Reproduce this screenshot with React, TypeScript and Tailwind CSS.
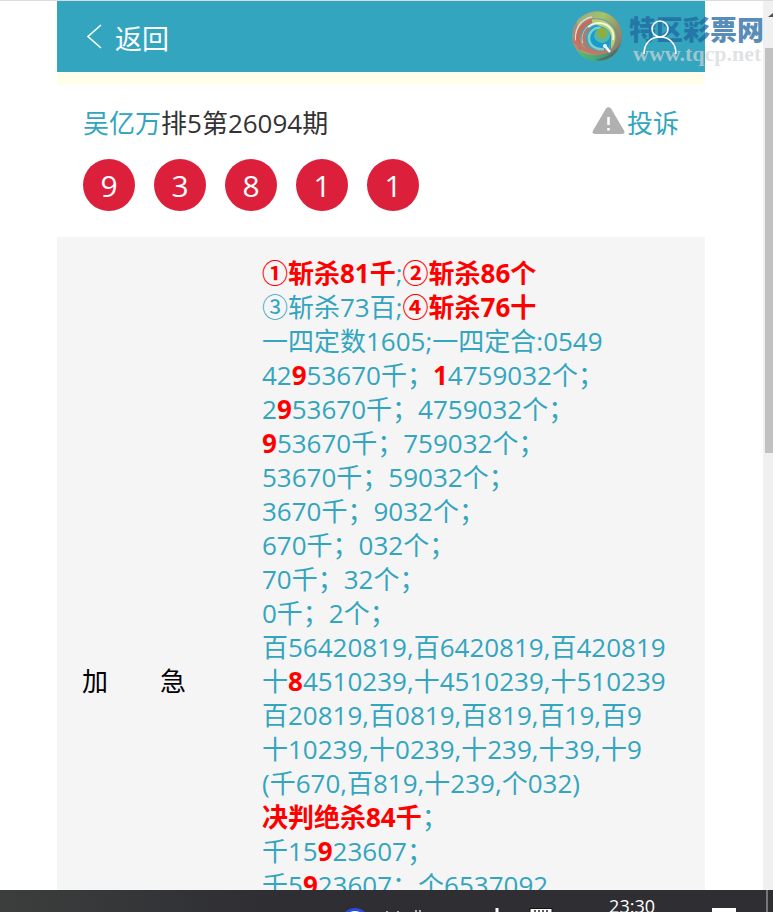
import React from 'react';

interface Segment {
  text: string;
  hot?: boolean;
}

// *...* marks a highlighted part of a line
const PLAN_LINES = [
  '*①斩杀81千*;*②斩杀86个*',
  '③斩杀73百;*④斩杀76十*',
  '一四定数1605;一四定合:0549',
  '42*9*53670千；*1*4759032个；',
  '2*9*53670千；4759032个；',
  '*9*53670千；759032个；',
  '53670千；59032个；',
  '3670千；9032个；',
  '670千；032个；',
  '70千；32个；',
  '0千；2个；',
  '百56420819,百6420819,百420819',
  '十*8*4510239,十4510239,十510239',
  '百20819,百0819,百819,百19,百9',
  '十10239,十0239,十239,十39,十9',
  '(千670,百819,十239,个032)',
  '*决判绝杀84千*；',
  '千15*9*23607；',
  '千5*9*23607；个6537092',
];

const DRAW_NUMBERS = [9, 3, 8, 1, 1];

function parseLine(line: string): Segment[] {
  return line
    .split('*')
    .map((text, i) => ({ text, hot: i % 2 === 1 }))
    .filter((segment) => segment.text !== '');
}

function UserIcon() {
  return (
    <svg width="34" height="38" viewBox="0 0 34 38" fill="none" stroke="#fff" strokeWidth="1.6">
      <circle cx="17" cy="11" r="8" />
      <path d="M1 36c0-10 6-17 16-17s16 7 16 17" />
    </svg>
  );
}

function SwirlLogo() {
  return (
    <svg width="52" height="52" viewBox="0 0 52 52" fill="none">
      <defs>
        <linearGradient id="swirl-base" x1="0" y1="0.3" x2="1" y2="0.7">
          <stop offset="0" stopColor="#b0857a" />
          <stop offset="0.5" stopColor="#9aa383" />
          <stop offset="1" stopColor="#8a7a6c" />
        </linearGradient>
        <linearGradient id="swirl-top" x1="0" y1="0" x2="1" y2="0.6">
          <stop offset="0" stopColor="#8fa890" />
          <stop offset="0.5" stopColor="#a3c468" />
          <stop offset="1" stopColor="#8f8f6c" />
        </linearGradient>
        <linearGradient id="swirl-bottom" x1="0" y1="0" x2="1" y2="0">
          <stop offset="0" stopColor="#58bd6c" />
          <stop offset="0.6" stopColor="#3f9f7c" />
          <stop offset="1" stopColor="#6d6f68" />
        </linearGradient>
      </defs>
      <circle cx="26" cy="26" r="25" fill="url(#swirl-base)" />
      <path d="M6 11C16-1 36-2 46 12c3 5 5 10 4 16C45 13 32 6 19 8 13 9 9 12 6 17z" fill="url(#swirl-top)" />
      <path d="M6 40c10 6 24 8 38-1 3-2 5-5 6-8-2 14-13 21-25 20-8 0-15-4-19-11z" fill="url(#swirl-bottom)" />
      <path d="M24 50c8-2 17-5 23-12-3 8-12 14-23 12z" fill="#555d63" opacity="0.7" />
      <circle cx="27" cy="26" r="17" fill="#35a6c2" />
      <path d="M13 13c10-7 23-4 29 5 4 7 3 15-2 21 1-10-2-19-11-23-6-3-12-3-16-3z" fill="#b9cf70" />
      <path d="M20 18c8-4 18-1 20 8 1 6-2 12-8 14-8 1-13-4-14-10-1-5 0-9 2-12z" fill="#169bd2" />
      <path d="M5 31c-2-12 5-22 16-24" stroke="#dfd9c9" strokeWidth="1.5" />
      <path d="M10 39c-7-12-1-25 11-28" stroke="#c56d5b" strokeWidth="4" />
      <path d="M12 33c-2-12 6-20 17-20 9 1 15 8 13 17" stroke="#eef7ea" strokeWidth="1.8" />
      <path d="M30 42c-10 1-17-5-17-14 0-4 2-7 5-10" stroke="#b5796c" strokeWidth="3.5" />
      <path d="M33 39c-9 1-15-4-15-11 0-6 5-11 12-10" stroke="#7fd0c5" strokeWidth="2.5" />
      <path d="M2 31c4 1 6 6 12 9 8 4 17 4 24 0" stroke="#c77562" strokeWidth="3" />
      <path d="M23 27c0-7 6-11 12-8 4 2 5 7 3 10-3 5-11 6-15-2z" fill="#55b7a1" />
      <circle cx="31" cy="23" r="5" fill="#8fae3c" />
      <path d="M33 35l6 7" stroke="#fff" strokeWidth="2.5" />
      <circle cx="34" cy="36" r="2" fill="#e8f5fa" />
    </svg>
  );
}

function Watermark() {
  return (
    <div className="pointer-events-none flex gap-1.5">
      <SwirlLogo />
      <div className="flex flex-col whitespace-nowrap pt-1">
        <span className="text-[27px] leading-8 font-black text-[#1f679f]/75">特区彩票网</span>
        <span className="pl-1 font-['Liberation_Serif',serif] text-[22px] leading-4 font-bold text-[#d2d5d8]/70">
          www.tqcp.net
        </span>
      </div>
    </div>
  );
}

function Header() {
  return (
    <header className="flex h-[71px] items-center justify-between bg-[#33a5be] px-7 text-white">
      <button type="button" className="flex items-center gap-3 text-[27px] leading-9">
        <svg width="18" height="26" viewBox="0 0 18 26" fill="none" stroke="#fff" strokeWidth="1.6">
          <path d="M16 1L3 12.500 16 24" />
        </svg>
        <span className="pt-1">返回</span>
      </button>
      <button type="button" aria-label="个人中心" className="relative z-10">
        <UserIcon />
      </button>
    </header>
  );
}

function IssueSummary() {
  return (
    <section className="px-[26px] pt-5 pb-[26px]">
      <div className="flex items-center justify-between leading-9">
        <h1 className="text-[#333]">
          <a href="#author" className="text-[#33a5be]">
            吴亿万
          </a>
          排5第26094期
        </h1>
        <a href="#complain" className="flex items-center gap-0.5 text-[#33a5be]">
          <svg width="33" height="28" viewBox="0 0 33 28" className="mb-1">
            <path
              d="M14 1.500Q16.500-1 19 1.500L32 23.500Q33.500 27 30 27H3Q-.5 27 1 23.500z"
              fill="#b0b0b0"
            />
            <path d="M16.500 10v8M16.500 21v2.500" stroke="#fff" strokeWidth="2.5" />
          </svg>
          投诉
        </a>
      </div>
      <ul className="mt-[18px] flex gap-[19px]">
        {DRAW_NUMBERS.map((n, i) => (
          <li
            key={i}
            className="flex size-[52px] items-center justify-center rounded-full bg-[#dc203c] text-[30px] text-white"
          >
            {n}
          </li>
        ))}
      </ul>
    </section>
  );
}

function PlanPanel() {
  return (
    <section className="flex items-center bg-[#f5f5f5] py-[19px] pl-[25px]">
      <h2 className="w-[180px] shrink-0 text-black">加　　急</h2>
      <div className="pb-[204px] leading-[34px] whitespace-nowrap text-[#33a5be]">
        {PLAN_LINES.map((line) => (
          <p key={line}>
            {parseLine(line).map((segment, i) =>
              segment.hot ? (
                <strong key={i} className="font-bold text-[#ff0000]">
                  {segment.text}
                </strong>
              ) : (
                <span key={i}>{segment.text}</span>
              )
            )}
          </p>
        ))}
      </div>
    </section>
  );
}

function ScrollTrack() {
  return (
    <div className="flex w-2.5 shrink-0 flex-col bg-[#f0f0f0] pl-0.5">
      <div className="flex h-[47px] shrink-0 items-start overflow-hidden pt-3">
        <svg width="8" height="5" viewBox="0 0 8 5">
          <path d="M3 4L8 0v4z" fill="#505050" />
        </svg>
      </div>
      <div className="h-[405px] bg-[#c1c1c1]" />
    </div>
  );
}

function Taskbar() {
  return (
    <footer className="flex h-[22px] shrink-0 items-start overflow-hidden bg-linear-to-r from-[#3c3e3d] via-[#2e2e33] via-35% to-[#2e2e33] text-white">
      <div className="flex flex-1 justify-end pr-[56px]">
        <svg width="212" height="22" viewBox="0 0 212 22" fill="none">
          <circle cx="14" cy="32" r="12.5" fill="#fff" stroke="#2a4be0" strokeWidth="3" />
          <path d="M46 21v2M57 21v2M75 20v2M79 20v2" stroke="#ddd" strokeWidth="1.5" />
          <path d="M156 18v4" stroke="#fff" strokeWidth="3" />
          <path d="M189 18.500h22v4h-22z" fill="#fff" stroke="#111" />
          <path d="M194 20v2M198 20v2M202 20v2M206 20v2" stroke="#222" strokeWidth="1.5" />
        </svg>
      </div>
      <time className="pt-1 text-[18px] leading-6">23:30</time>
      <div className="mt-[18px] ml-[57px] h-1 w-6 bg-white" />
      <div className="ml-[30px] h-full w-0.5 bg-[#77777a]" />
      <div className="w-[5px]" />
    </footer>
  );
}

export default function App() {
  return (
    <div className="flex h-screen flex-col overflow-hidden bg-white font-['Open_Sans','Noto_Sans_CJK_SC',sans-serif] text-[26px]">
      <div className="relative flex min-h-0 flex-1 border-t border-[#dcdcdc]">
        <main className="mr-[58px] ml-[57px] min-w-0 flex-1 overflow-hidden">
          <Header />
          <div className="h-[13px] bg-[#fffeeb]" />
          <IssueSummary />
          <PlanPanel />
        </main>
        <ScrollTrack />
        <div className="absolute top-[9px] right-[9px]">
          <Watermark />
        </div>
      </div>
      <Taskbar />
    </div>
  );
}
